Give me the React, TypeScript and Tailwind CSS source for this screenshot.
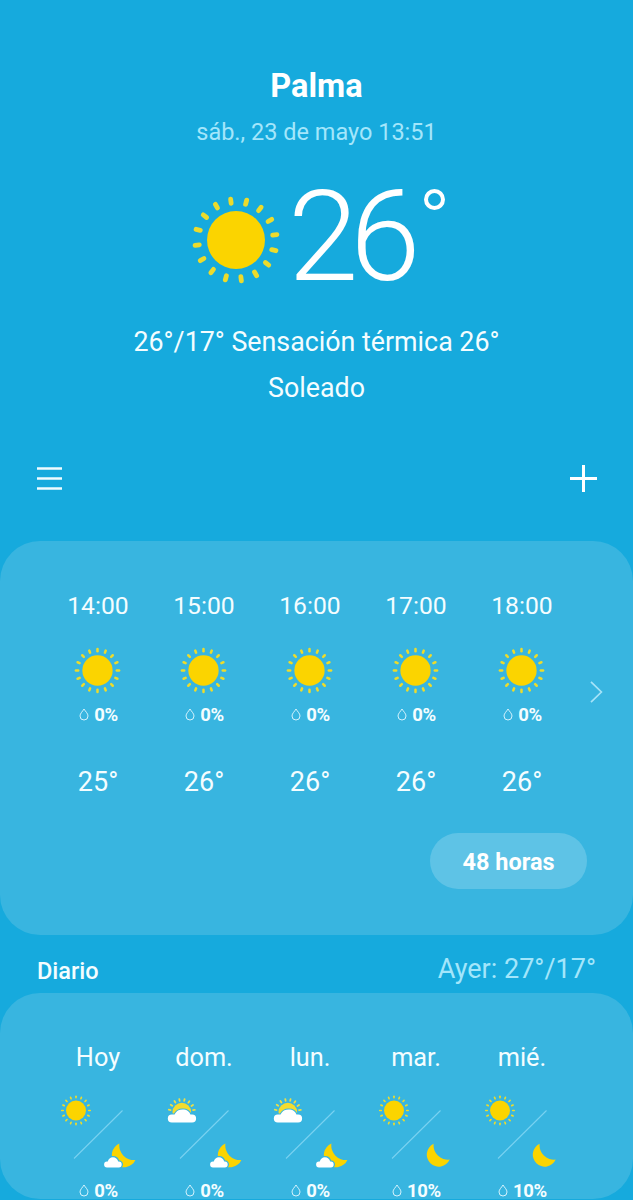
import { ReactNode } from 'react';

type DayIcon = 'sun' | 'cloudy';
type NightIcon = 'moon' | 'cloudyMoon';

interface Day {
  name: string;
  day: DayIcon;
  night: NightIcon;
  rain: string;
}

const HOURS = [
  { time: '14:00', rain: '0%', temp: '25°' },
  { time: '15:00', rain: '0%', temp: '26°' },
  { time: '16:00', rain: '0%', temp: '26°' },
  { time: '17:00', rain: '0%', temp: '26°' },
  { time: '18:00', rain: '0%', temp: '26°' },
];

const DAYS: Day[] = [
  { name: 'Hoy', day: 'sun', night: 'cloudyMoon', rain: '0%' },
  { name: 'dom.', day: 'cloudy', night: 'cloudyMoon', rain: '0%' },
  { name: 'lun.', day: 'cloudy', night: 'cloudyMoon', rain: '0%' },
  { name: 'mar.', day: 'sun', night: 'moon', rain: '10%' },
  { name: 'mié.', day: 'sun', night: 'moon', rain: '10%' },
];

const RAYS = Array.from({ length: 16 }, (_, i) => i * 22.5);

function Sun({ size, turn = 0, x, y }: { size: number; turn?: number; x?: number; y?: number }) {
  return (
    <svg x={x} y={y} width={size} height={size} viewBox="-45 -45 90 90" className="block shrink-0">
      <circle r="29" fill="#fbd400" />
      {RAYS.map(a => (
        <line key={a} y1="-37" y2="-41.3" stroke="#ecdb2c" strokeWidth="4.8" strokeLinecap="round" transform={`rotate(${a + turn})`} />
      ))}
    </svg>
  );
}

function Rain({ children }: { children: ReactNode }) {
  return (
    <div className="flex items-center gap-[5px] pl-[1px] h-4">
      <svg width="10" height="13" viewBox="0 0 10 13" fill="none" stroke="#e4f8ff" strokeWidth="0.9" className="mb-[2px]">
        <path d="M5 1C3.7 3.4 1 5.4 1 8a4 4 0 0 0 8 0C9 5.4 6.3 3.4 5 1Z" />
      </svg>
      <span className="text-[18.5px] leading-4 font-bold tracking-[-0.3px]">{children}</span>
    </div>
  );
}

function DayNight({ day, night }: { day: DayIcon; night: NightIcon }) {
  return (
    <svg width="106" height="80" viewBox="0 0 106 80" className="block shrink-0">
      <path d="M29 68.5L77.5 20.5" stroke="#79d2f1" strokeWidth="1.1" />
      {day === 'sun' && <Sun size={31} x={15.5} y={5} />}
      {day === 'cloudy' && (
        <g>
          <circle cx="30.8" cy="22" r="9.3" fill="#f3dc2e" />
          {[-80, -57, -34, -11, 12, 35, 58, 81].map(a => (
            <path key={a} d="M30.8 10.6V8.8" stroke="#ecdf45" strokeWidth="1.8" strokeLinecap="round" transform={`rotate(${a} 30.8 22)`} />
          ))}
          <path
            d="M20.8 32.6A3.9 3.9 0 0 1 20.8 24.6H23.4C24.5 24.3 24.8 19.6 31.4 19.6C36 19.6 38.6 21.7 39.4 24.6H41.1A3.9 3.9 0 0 1 41.1 32.6Z"
            fill="#fff"
            stroke="#38b5e0"
            strokeWidth="2.2"
            paintOrder="stroke"
          />
        </g>
      )}
      {night === 'moon' && <path d="M70.6 53.8A12 12 0 1 0 86.7 69.6A14.5 14.5 0 0 1 70.6 53.8Z" fill="#fbd400" />}
      {night === 'cloudyMoon' && (
        <g>
          <path d="M74.4 53.6A12.3 12.3 0 1 0 90.4 69.9A14.5 14.5 0 0 1 74.4 53.6Z" fill="#fbd400" />
          <path
            d="M62 77.4A2.9 2.9 0 0 1 62 71.6H62.8C63.4 69.1 65.4 67.3 67.9 67.3S72.6 69.1 73.2 71.6H73.8A2.9 2.9 0 0 1 73.8 77.4Z"
            fill="#fff"
            stroke="#38b5e0"
            strokeWidth="2.6"
            paintOrder="stroke"
          />
        </g>
      )}
    </svg>
  );
}

export default function App() {
  return (
    <div className="w-[633px] h-[1200px] overflow-hidden bg-[#16aadd] text-[#f4fdff] font-['Roboto',sans-serif]">
      {/* Current conditions */}
      <header className="flex flex-col items-center h-[541px] pt-[66px]">
        <h1 className="text-[32.5px] leading-10 font-bold text-white">Palma</h1>
        <p className="mt-[11px] text-[23.5px] leading-[30px] text-[#a3e6fb]">sáb., 23 de mayo 13:51</p>
        <div className="flex items-start w-full h-[132px] mt-[23px] pl-[191px]">
          <div className="pt-[25px]">
            <Sun size={90} turn={15} />
          </div>
          <span className="ml-[7px] mt-[1px] text-[127px] leading-[132px] font-light text-white tracking-[-8.5px]">26</span>
          <span className="ml-[12px] mt-[19px] size-[21px] rounded-full border-4 border-white" />
        </div>
        <p className="mt-[23px] text-[26.8px] leading-[34px]">26°/17° Sensación térmica 26°</p>
        <p className="mt-[12px] text-[26.8px] leading-[34px]">Soleado</p>
        <div className="flex items-center justify-between w-full mt-[60px] pl-[37px] pr-[36px]">
          <svg width="25" height="27" viewBox="0 0 25 27" stroke="#effcff" strokeWidth="2.6">
            <path d="M0 3.5H25M0 13.5H25M0 23.5H25" />
          </svg>
          <svg width="27" height="27" viewBox="0 0 27 27" stroke="#fff" strokeWidth="3">
            <path d="M0 13.5H27M13.5 0V27" />
          </svg>
        </div>
      </header>

      {/* Hourly forecast */}
      <section className="flex flex-col h-[394px] rounded-[40px] bg-[#38b5e0] pt-[50px]">
        <div className="flex items-center pl-[45px]">
          {HOURS.map(h => (
            <div key={h.time} className="flex flex-col items-center w-[106px]">
              <span className="text-[24.7px] leading-[30px]">{h.time}</span>
              <div className="mt-[26px] mb-[13px] pr-[1px]">
                <Sun size={47} />
              </div>
              <Rain>{h.rain}</Rain>
              <span className="mt-[43px] text-[27px] leading-[32px]">{h.temp}</span>
            </div>
          ))}
          <svg width="13" height="22" viewBox="0 0 13 22" fill="none" stroke="#a5e3f8" strokeWidth="1.7" className="ml-[15px] mb-[5px]">
            <path d="M1 0.8L11.4 11L1 21.2" />
          </svg>
        </div>
        <button className="self-end mt-[35px] mr-[46px] w-[157px] h-[56px] rounded-full bg-[#5ec3e6] pt-[3px] text-[23.5px] font-bold text-white">48 horas</button>
      </section>

      <div className="flex justify-between h-[58px] pl-[37px] pr-[37px]">
        <h2 className="pt-[20px] text-[23.5px] leading-8 font-medium">Diario</h2>
        <span className="pt-[18px] text-[27px] leading-8 text-[#a3e6fb]">Ayer: 27°/17°</span>
      </div>

      {/* Daily forecast */}
      <section className="flex h-[206px] rounded-[40px] bg-[#38b5e0] pt-[50px] pl-[45px]">
        {DAYS.map(d => (
          <div key={d.name} className="flex flex-col items-center w-[106px]">
            <span className="text-[25.3px] leading-[30px] mb-[17px]">{d.name}</span>
            <DayNight day={d.day} night={d.night} />
            <div className="mt-[13px]">
              <Rain>{d.rain}</Rain>
            </div>
          </div>
        ))}
      </section>
    </div>
  );
}
